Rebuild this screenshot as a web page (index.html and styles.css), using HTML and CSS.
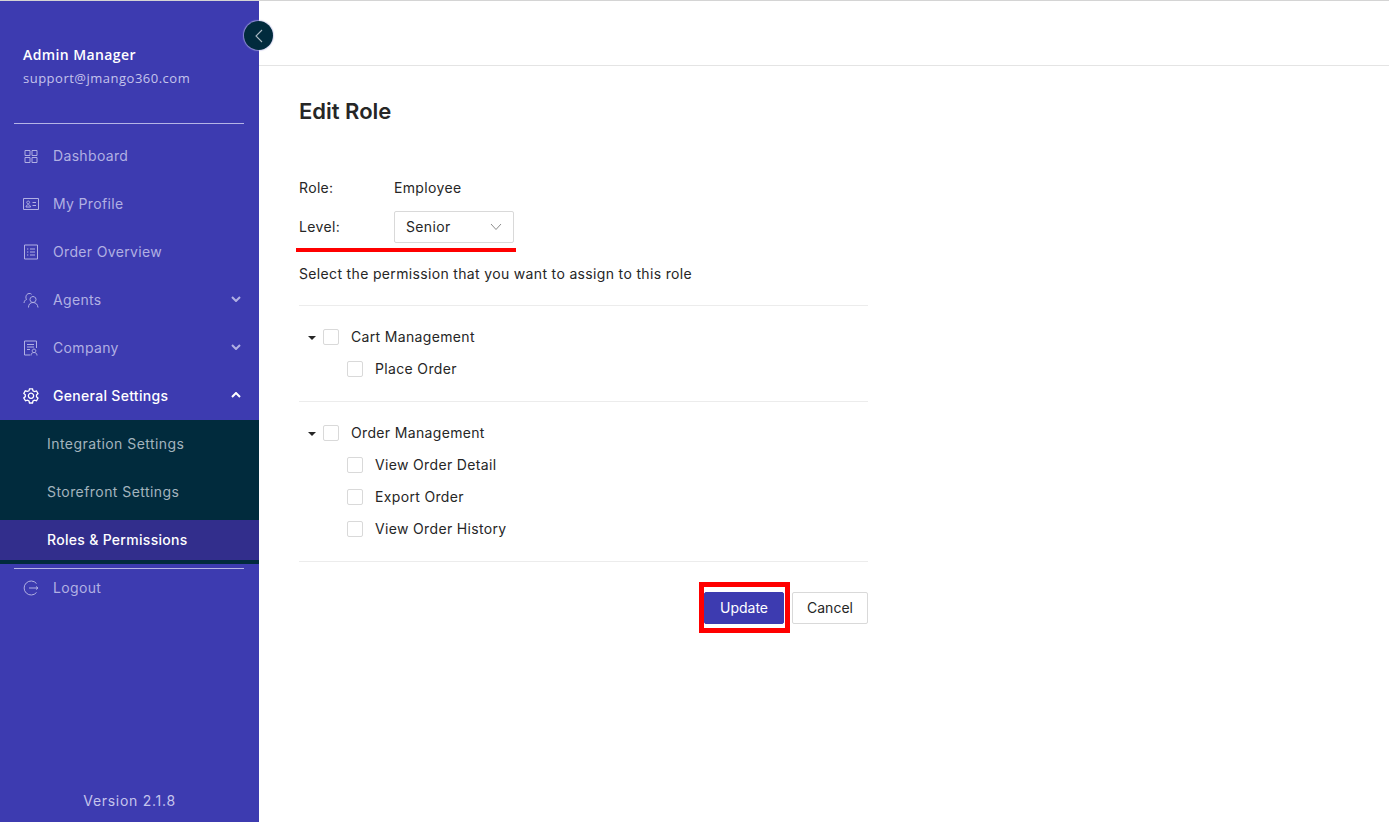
FILE: index.html
```html
<!DOCTYPE html>
<html lang="en">
<head>
<meta charset="utf-8">
<title>Edit Role</title>
<link rel="stylesheet" href="styles.css">
</head>
<body>
<div class="app">
  <aside class="sidebar">
    <button class="toggle" type="button" aria-label="Collapse">
      <svg width="12" height="14" viewBox="0 0 12 14"><path d="M9 1 3 7l6 6" fill="none" stroke="#a9b8c2" stroke-width="1.1"/></svg>
    </button>
    <div class="profile">
      <div class="profile-name">Admin Manager</div>
      <div class="profile-mail">support@jmango360.com</div>
    </div>
    <div class="rule"></div>
    <nav class="nav">
      <a class="item">
        <svg class="ico" viewBox="0 0 16 16"><path d="M2 2.500h5v5H2zM9 2.500h5v5H9zM2 9.500h5v5H2zM9 9.500h5v5H9z"/></svg>
        <span>Dashboard</span>
      </a>
      <a class="item">
        <svg class="ico" viewBox="0 0 16 16"><path d="M.5 2.500h15v11H.5zM9.500 6.500h3.500M9.500 9.500h3.500M3 11c.2-3 4.300-3 4.500 0zM5.200 5a1.400 1.400 0 1 0 .01 0z"/></svg>
        <span>My Profile</span>
      </a>
      <a class="item">
        <svg class="ico" viewBox="0 0 16 16"><path d="M1.500 1h13v14h-13zM7 5h5M7 8h5M7 11h5M4 5h1.300M4 8h1.300M4 11h1.300"/></svg>
        <span>Order Overview</span>
      </a>
      <a class="item">
        <svg class="ico" viewBox="0 0 16 16"><path d="M1 11c.3-2 1-3 2.500-3.500C2.500 6 2.500 2 6 1.500c1.200-.2 2 .2 2.600.8M5.500 15.500c0-3 1.500-5 4.500-5s4.700 2 5 5M10 4.500a3 3 0 1 0 .01 0z"/></svg>
        <span>Agents</span>
        <svg class="chev" viewBox="0 0 10 6"><path d="M1 1l4 4 4-4"/></svg>
      </a>
      <a class="item">
        <svg class="ico" viewBox="0 0 16 16"><path d="M7 15H1.500V1h12v7M4 4.500h7M4 7h7M4 9.500h3M11 9a1.800 1.800 0 1 0 .01 0zM8 15.500c0-2 1.200-3 3-3s3 1 3 3"/></svg>
        <span>Company</span>
        <svg class="chev" viewBox="0 0 10 6"><path d="M1 1l4 4 4-4"/></svg>
      </a>
      <a class="item item-open">
        <svg class="ico" viewBox="0 0 16 16"><path d="M6.500.800h3l.5 2 1.500.8 2-.6 1.500 2.600-1.500 1.400v1.800l1.500 1.400-1.500 2.600-2-.6-1.500.8-.5 2h-3l-.5-2-1.500-.8-2 .6L.800 10l1.500-1.400V6.800L.800 5.400 2.300 2.800l2 .6L6 2.800zM8 5.200a2.600 2.600 0 1 0 .01 0z"/></svg>
        <span>General Settings</span>
        <svg class="chev" viewBox="0 0 10 6"><path d="M1 5l4-4 4 4"/></svg>
      </a>
      <div class="sub">
        <a class="sub-item">Integration Settings</a>
        <a class="sub-item">Storefront Settings</a>
        <a class="sub-item sub-active">Roles &amp; Permissions</a>
      </div>
    </nav>
    <div class="rule rule-low"></div>
    <a class="item item-logout">
      <svg class="ico" viewBox="0 0 16 16"><path d="M13.500 3.500A7 7 0 1 0 13.500 12.500M6 8h9M13 6.500 15 8l-2 1.500"/></svg>
      <span>Logout</span>
    </a>
    <div class="version">Version 2.1.8</div>
  </aside>
  <div class="content">
    <header class="topbar"></header>
    <main class="main">
      <h1 class="title">Edit Role</h1>
      <div class="field field-role">
        <span class="field-label">Role:</span>
        <span>Employee</span>
      </div>
      <div class="field field-level">
        <span class="field-label">Level:</span>
        <div class="select">
          <span>Senior</span>
          <svg width="12" height="8" viewBox="0 0 12 8"><path d="M1 1 6 6.500 11 1" fill="none" stroke="#8c8c8c" stroke-width="1"/></svg>
        </div>
        <div class="mark-line"></div>
      </div>
      <p class="hint">Select the permission that you want to assign to this role</p>
      <section class="tree">
        <div class="tree-row">
          <span class="caret"></span>
          <span class="check"></span>
          <span class="tree-label">Cart Management</span>
        </div>
        <div class="tree-row tree-child">
          <span class="check"></span>
          <span class="tree-label">Place Order</span>
        </div>
      </section>
      <section class="tree">
        <div class="tree-row">
          <span class="caret"></span>
          <span class="check"></span>
          <span class="tree-label">Order Management</span>
        </div>
        <div class="tree-row tree-child">
          <span class="check"></span>
          <span class="tree-label">View Order Detail</span>
        </div>
        <div class="tree-row tree-child">
          <span class="check"></span>
          <span class="tree-label">Export Order</span>
        </div>
        <div class="tree-row tree-child">
          <span class="check"></span>
          <span class="tree-label">View Order History</span>
        </div>
      </section>
      <div class="actions">
        <button class="btn btn-primary" type="button">Update</button>
        <button class="btn btn-cancel" type="button">Cancel</button>
      </div>
    </main>
  </div>
</div>
</body>
</html>
```
FILE: styles.css
```css
*, *::before, *::after { box-sizing: border-box; }
html, body { height: 100%; }
body {
  margin: 0;
  background: #fff;
  color: #262626;
  font-family: Inter, "Liberation Sans", sans-serif;
  font-size: 14px;
  letter-spacing: 0.34px;
  overflow: hidden;
}
.app {
  display: flex;
  height: 822px;
  border-top: 1px solid #d4d4d4;
}
.sidebar {
  position: relative;
  flex: 0 0 259px;
  display: flex;
  flex-direction: column;
  background: #3d3bb0;
  color: #b1b0e3;
}
.toggle {
  position: absolute;
  top: 20px;
  left: 244px;
  width: 29px;
  height: 29px;
  padding: 0;
  display: flex;
  align-items: center;
  justify-content: center;
  border: 0;
  border-radius: 50%;
  background: #012b3d;
  box-shadow: 0 0 1px 1px rgba(190, 190, 230, 0.6);
}
.profile {
  height: 122px;
  padding: 44px 23px 0;
  font-family: "Open Sans", sans-serif;
}
.profile-name {
  color: #fff;
  font-weight: 600;
  font-size: 14px;
  line-height: 20px;
  letter-spacing: 0.4px;
}
.profile-mail {
  margin-top: 3px;
  color: #c5c4ec;
  font-size: 13px;
  line-height: 20px;
  letter-spacing: 0.5px;
}
.rule {
  height: 1px;
  margin: 0 15px 0 14px;
  background: #b5b4e6;
}
.nav { margin-top: 8px; }
.item {
  display: flex;
  align-items: center;
  height: 48px;
  padding: 0 18px 0 23px;
}
.item > span {
  flex: 1;
  margin-left: 14px;
  padding-bottom: 2px;
}
.ico {
  flex: none;
  width: 16px;
  height: 16px;
  fill: none;
  stroke: currentColor;
  stroke-width: 1;
}
.chev {
  flex: none;
  width: 10px;
  height: 6px;
  margin-top: -2px;
  fill: none;
  stroke: currentColor;
  stroke-width: 2;
}
.item-open { color: #fff; font-weight: 500; letter-spacing: 0.3px; }
.item-open .ico { stroke-width: 1.300; }
.sub { background: #012b3d; padding-bottom: 4px; }
.sub-item {
  display: flex;
  align-items: center;
  height: 48px;
  padding: 0 0 2px 47px;
  color: #a3b4bd;
  letter-spacing: 0.44px;
}
.sub-item.sub-active {
  height: 40px;
  margin-top: 4px;
  background: #322e8c;
  color: #fff;
  font-weight: 500;
  letter-spacing: 0.3px;
}
.rule-low { margin-top: 4px; }
.item-logout { height: 38px; }
.version {
  margin-top: auto;
  height: 30px;
  text-align: center;
  color: #c5c4ec;
  letter-spacing: 0.72px;
}
.content { flex: 1; min-width: 0; }
.topbar {
  height: 65px;
  border-bottom: 1px solid #e4e4e4;
}
.main {
  width: 629px;
  padding: 0 20px 0 40px;
}
.title {
  margin: 30px 0 0;
  font-size: 22px;
  font-weight: 600;
  line-height: 30px;
  letter-spacing: 0;
}
.field {
  display: flex;
  align-items: center;
  line-height: 22px;
}
.field-role { margin-top: 51px; height: 22px; }
.field-level {
  position: relative;
  margin-top: 12px;
  height: 32px;
}
.field-label { flex: 0 0 95px; }
.select {
  display: flex;
  align-items: center;
  justify-content: space-between;
  width: 120px;
  height: 32px;
  padding: 0 11px;
  border: 1px solid #d9d9d9;
  border-radius: 2px;
}
.mark-line {
  position: absolute;
  left: -3px;
  top: 37px;
  width: 220px;
  height: 4px;
  background: #ff0000;
}
.hint {
  margin: 20px 0 0;
  line-height: 22px;
}
.tree {
  margin-top: 20px;
  padding: 15px 0 16px;
  border-top: 1px solid #ececec;
}
.tree + .tree { margin-top: 0; }
.tree:last-of-type { border-bottom: 1px solid #ececec; }
.tree-row {
  position: relative;
  display: flex;
  align-items: center;
  height: 32px;
  padding-left: 24px;
}
.tree-label { padding-bottom: 2px; }
.tree-child { padding-left: 48px; }
.check {
  flex: none;
  width: 16px;
  height: 16px;
  margin-right: 12px;
  border: 1px solid #d9d9d9;
  border-radius: 2px;
}
.caret {
  position: absolute;
  left: 9px;
  top: 15px;
  border-left: 4px solid transparent;
  border-right: 4px solid transparent;
  border-top: 4px solid #262626;
}
.actions {
  display: flex;
  justify-content: flex-end;
  gap: 8px;
  margin-top: 30px;
}
.btn {
  position: relative;
  height: 32px;
  padding: 0 0 2px;
  border: 1px solid #d9d9d9;
  border-radius: 2px;
  background: #fff;
  color: #262626;
  font: inherit;
  letter-spacing: 0;
}
.btn-cancel { width: 76px; }
.btn-primary {
  width: 80px;
  border-color: #3d3bb0;
  background: #3d3bb0;
  color: #fff;
}
.btn-primary::after {
  content: "";
  position: absolute;
  left: -6px;
  top: -11px;
  width: 91px;
  height: 51px;
  border: 5px solid #ff0000;
}
```
